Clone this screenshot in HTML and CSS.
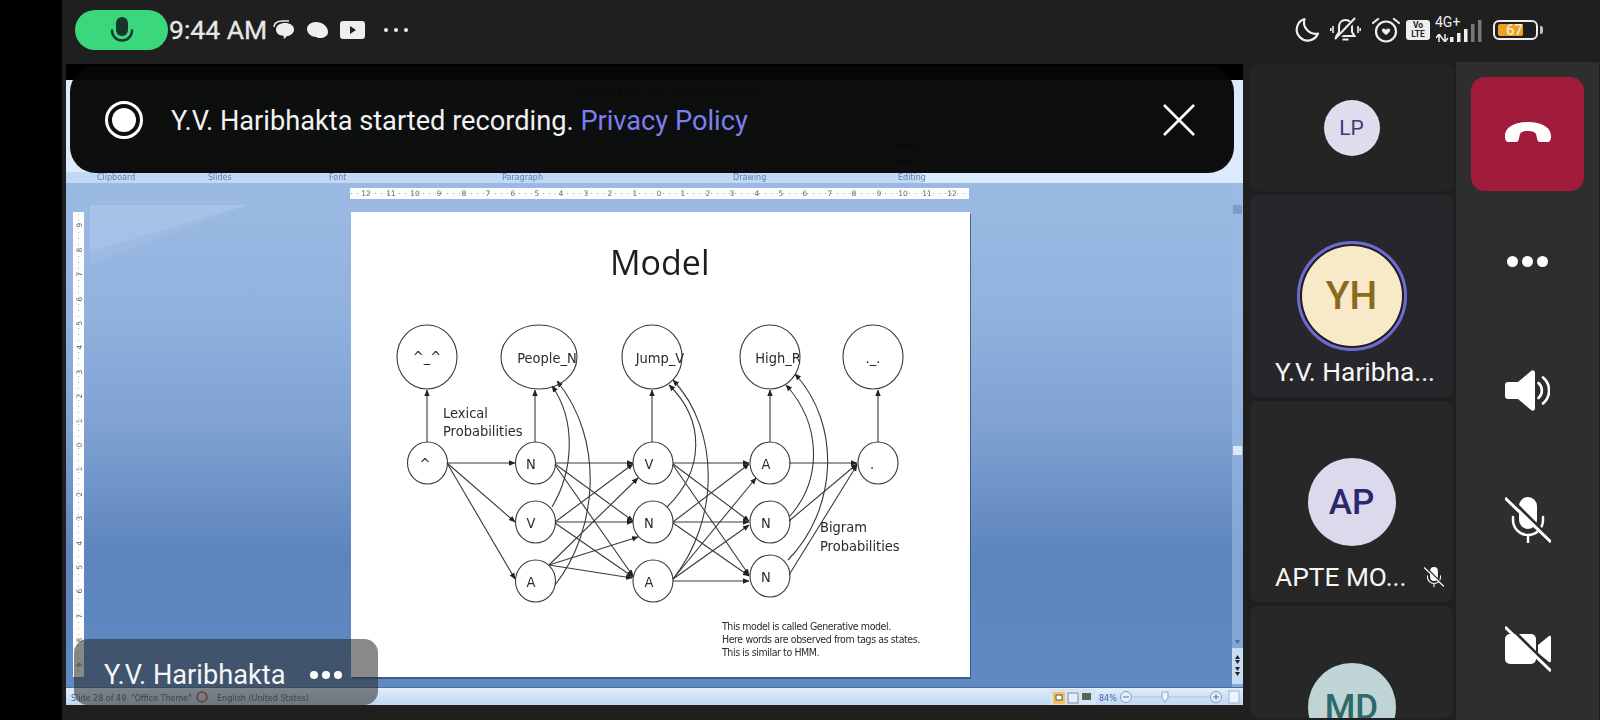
FILE: index.html
```html
<!DOCTYPE html>
<html lang="en">
<head>
    <meta charset="UTF-8">
    <meta name="viewport" content="width=device-width, initial-scale=1.0">
    <title>Meeting</title>
    <link rel="stylesheet" href="styles.css">
</head>
<body>
    <svg class="defs" width="0" height="0">
        <defs>
            <symbol id="mic-off" viewBox="0 0 46 46">
                <rect x="14" y="0" width="18" height="32" rx="9" fill="#fff"/>
                <path d="M8 20v3a15 15 0 0 0 30 0v-3M23 38v8" fill="none" stroke="#fff" stroke-width="2.5" stroke-linecap="round"/>
                <path d="M3 -1L49 45" stroke="#2e2e2e" stroke-width="3"/>
                <path d="M0 1L46 45" stroke="#fff" stroke-width="3"/>
            </symbol>
            <marker id="head" viewBox="0 0 6 6" refX="5.5" refY="3" markerWidth="6" markerHeight="6" orient="auto">
                <path d="M0 0.5L6 3L0 5.5Z" fill="#222"/>
            </marker>
            <linearGradient id="desk" x1="0" y1="0" x2="0" y2="1">
                <stop offset="0" stop-color="#9bbae3"/>
                <stop offset="0.25" stop-color="#92b2de"/>
                <stop offset="0.48" stop-color="#7fa2d2"/>
                <stop offset="0.74" stop-color="#5d84bd"/>
                <stop offset="1" stop-color="#5f8ac4"/>
            </linearGradient>
            <linearGradient id="strip" x1="0" y1="0" x2="0" y2="1">
                <stop offset="0" stop-color="#e2eefb"/>
                <stop offset="1" stop-color="#c0d6f1"/>
            </linearGradient>
        </defs>
    </svg>

    <div class="bezel"></div>
    <div class="phone">
        <header class="statusbar">
            <div class="mic-pill">
                <svg width="24" height="26" viewBox="0 0 24 26">
                    <rect x="6" y="0" width="12" height="19" rx="6" fill="#17352a"/>
                    <path d="M2 13.5a10 10 0 0 0 20 0" fill="none" stroke="#17352a" stroke-width="2.4" stroke-linecap="round"/>
                </svg>
            </div>
            <span class="clock">9:44 AM</span>
            <div class="notif-icons">
                <svg width="22" height="20" viewBox="0 0 22 20">
                    <path d="M1 7C1 3 5 1 10 1h6" fill="none" stroke="#eee" stroke-width="1.4"/>
                    <path d="M3 9.5C3 5.5 7 3 12 3s9 2.5 9 6.5-4 6.5-7 6.5l-3 3-.5-3.2C6 15.6 3 13 3 9.5Z" fill="#eee"/>
                </svg>
                <svg width="23" height="18" viewBox="0 0 23 18">
                    <path d="M1 8c0-4 4-7 9-7 6 0 12 4 12 10 0 4-4 6-8 6-2 0-3-.5-4-1-5 0-9-4-9-8Z" fill="#eee"/>
                </svg>
                <svg width="25" height="18" viewBox="0 0 25 18">
                    <rect width="25" height="18" rx="3" fill="#eee"/>
                    <path d="M10 5l6 4-6 4Z" fill="#222"/>
                </svg>
                <div class="more-dots">
                    <span></span><span></span><span></span>
                </div>
            </div>
            <div class="sys-icons">
                <svg class="ico-moon" width="26" height="26" viewBox="0 0 26 26">
                    <path d="M10.5 2A11 11 0 1 0 24 16.5 11.5 11.5 0 0 1 10.5 2Z" fill="none" stroke="#eee" stroke-width="2.2" stroke-linejoin="round"/>
                </svg>
                <svg class="ico-bell" width="31" height="26" viewBox="0 0 31 26">
                    <path d="M15.5 3c-4 0-6.5 3-6.5 7v5l-2.500 4h18l-2.500-4v-5c0-4-2.500-7-6.500-7ZM12.500 22.500h6" fill="none" stroke="#eee" stroke-width="2"/>
                    <path d="M3 9v7M.8 11v3M28 9v7M30.200 11v3" stroke="#eee" stroke-width="1.600"/>
                    <path d="M6 23L26 1" stroke="#222" stroke-width="4"/>
                    <path d="M5 22L25 1" stroke="#eee" stroke-width="2"/>
                </svg>
                <svg class="ico-alarm" width="28" height="26" viewBox="0 0 28 26">
                    <circle cx="14" cy="14.500" r="10" fill="none" stroke="#eee" stroke-width="2.200"/>
                    <path d="M1 6l5-4M27 6l-5-4" stroke="#eee" stroke-width="2.200" stroke-linecap="round"/>
                    <path d="M10 12.500c1-1.500 3-1 4 .5 1-1.500 3-2 4-.5s-2 4-4 5.500c-2-1.500-5-4-4-5.500Z" fill="#eee"/>
                </svg>
                <div class="volte"><span>Vo</span><span>LTE</span></div>
                <div class="network">
                    <span class="net-label">4G+</span>
                    <svg class="net-arrows" width="13" height="8" viewBox="0 0 13 8">
                        <path d="M3 8V2M0 4l3-4 3 4M9 0v6M6 4l3 4 3-4" stroke="#eee" stroke-width="1.500" fill="none"/>
                    </svg>
                    <svg class="net-bars" width="33" height="22" viewBox="0 0 33 22">
                        <rect x="0" y="17" width="3.500" height="5" fill="#eee"/>
                        <rect x="7" y="13" width="3.500" height="9" fill="#eee"/>
                        <rect x="14" y="9" width="3.500" height="13" fill="#eee"/>
                        <rect x="21" y="4" width="3.500" height="18" fill="#777"/>
                        <rect x="28" y="0" width="3.500" height="22" fill="#777"/>
                    </svg>
                </div>
                <div class="battery">
                    <div class="battery-body"><div class="battery-fill"></div><span class="battery-num">67</span></div>
                    <div class="battery-nub"></div>
                </div>
            </div>
        </header>

        <main class="main">
            <section class="stage">
                <svg class="shared-screen" width="1177" height="641" viewBox="66 64 1177 641">
                    <rect x="66" y="64" width="1177" height="641" fill="#000"/>
                    <!-- ribbon -->
                    <rect x="66" y="80" width="1177" height="103" fill="#dcebfb"/>
                    <rect x="66" y="172" width="856" height="11" fill="#c3d9f3"/>
                    <g class="ribbon-text">
                        <text x="97" y="180">Clipboard</text>
                        <text x="208" y="180">Slides</text>
                        <text x="329" y="180">Font</text>
                        <text x="502" y="180">Paragraph</text>
                        <text x="733" y="180">Drawing</text>
                        <text x="898" y="180">Editing</text>
                    </g>
                    <text class="ghost" x="572" y="94">POS tagging 2023 .pptx - Microsoft PowerPoint</text>
                    <text class="ghost" x="893" y="131">Find</text>
                    <text class="ghost" x="893" y="148">Replace</text>
                    <text class="ghost" x="893" y="164">Select</text>

                    <!-- workspace -->
                    <rect x="66" y="183" width="1177" height="505" fill="url(#desk)"/>
                    <path d="M90 205H247L90 265Z" fill="#b4cbed" opacity="0.2"/>
                    <path d="M90 205H247L90 252Z" fill="#b7cdee" opacity="0.35"/>

                    <!-- top ruler -->
                    <rect x="350" y="188" width="619" height="11" fill="#fdfdfd"/>
                    <g class="ruler">
                        <text x="366" y="196">12</text><text x="391" y="196">11</text><text x="415" y="196">10</text>
                        <text x="439" y="196">9</text><text x="464" y="196">8</text><text x="488" y="196">7</text>
                        <text x="513" y="196">6</text><text x="537" y="196">5</text><text x="561" y="196">4</text>
                        <text x="586" y="196">3</text><text x="610" y="196">2</text><text x="635" y="196">1</text>
                        <text x="659" y="196">0</text><text x="683" y="196">1</text><text x="708" y="196">2</text>
                        <text x="732" y="196">3</text><text x="757" y="196">4</text><text x="781" y="196">5</text>
                        <text x="805" y="196">6</text><text x="830" y="196">7</text><text x="854" y="196">8</text>
                        <text x="879" y="196">9</text><text x="903" y="196">10</text><text x="927" y="196">11</text>
                        <text x="952" y="196">12</text>
                    </g>
                    <path class="ruler-ticks" d="M351 193.500H969"/>

                    <!-- left ruler -->
                    <rect x="73" y="212" width="11" height="465" fill="#fdfdfd"/>
                    <path class="ruler-ticks" d="M78.500 214V676"/>
                    <g class="ruler">
                        <text transform="translate(82 225) rotate(-90)">9</text>
                        <text transform="translate(82 250) rotate(-90)">8</text>
                        <text transform="translate(82 274) rotate(-90)">7</text>
                        <text transform="translate(82 299) rotate(-90)">6</text>
                        <text transform="translate(82 323) rotate(-90)">5</text>
                        <text transform="translate(82 347) rotate(-90)">4</text>
                        <text transform="translate(82 372) rotate(-90)">3</text>
                        <text transform="translate(82 396) rotate(-90)">2</text>
                        <text transform="translate(82 421) rotate(-90)">1</text>
                        <text transform="translate(82 445) rotate(-90)">0</text>
                        <text transform="translate(82 469) rotate(-90)">1</text>
                        <text transform="translate(82 494) rotate(-90)">2</text>
                        <text transform="translate(82 518) rotate(-90)">3</text>
                        <text transform="translate(82 543) rotate(-90)">4</text>
                        <text transform="translate(82 567) rotate(-90)">5</text>
                        <text transform="translate(82 591) rotate(-90)">6</text>
                        <text transform="translate(82 616) rotate(-90)">7</text>
                        <text transform="translate(82 640) rotate(-90)">8</text>
                        <text transform="translate(82 665) rotate(-90)">9</text>
                    </g>

                    <!-- scrollbar -->
                    <rect x="1232" y="183" width="11" height="505" fill="#9dbbe4" opacity="0.6"/>
                    <rect x="1233" y="205" width="9" height="9" fill="#7d9ccb"/>
                    <rect x="1233" y="446" width="9" height="9" fill="#dbe8f8"/>
                    <rect x="1232" y="648" width="11" height="36" fill="#c8dcf4"/>
                    <path d="M1235 640h5l-2.500 4Z" fill="#50709f"/>
                    <path d="M1235 659l2.500-4 2.500 4ZM1235 660l2.500 4 2.500-4ZM1235 667h5l-2.500 4ZM1235 672h5l-2.500 4Z" fill="#222"/>

                    <!-- slide -->
                    <rect x="352" y="214" width="619" height="465" fill="#33527f" opacity="0.8"/>
                    <rect x="351" y="212" width="619" height="465" fill="#fff"/>
                    <text class="slide-title" x="610" y="275">Model</text>

                    <g class="edges">
                        <path d="M427 442V390" marker-end="url(#head)"/>
                        <path d="M535 442V390" marker-end="url(#head)"/>
                        <path d="M652 442V390" marker-end="url(#head)"/>
                        <path d="M770 442V390" marker-end="url(#head)"/>
                        <path d="M878 442V390" marker-end="url(#head)"/>
                        <path d="M447 463H515" marker-end="url(#head)"/>
                        <path d="M447 463L515 522" marker-end="url(#head)"/>
                        <path d="M447 463L515 579" marker-end="url(#head)"/>

                        <path d="M555 463H633" marker-end="url(#head)"/>
                        <path d="M555 464L633 521" marker-end="url(#head)"/>
                        <path d="M555 465L633 576" marker-end="url(#head)"/>
                        <path d="M555 522L633 464" marker-end="url(#head)"/>
                        <path d="M555 522H633" marker-end="url(#head)"/>
                        <path d="M555 523L633 577" marker-end="url(#head)"/>
                        <path d="M549 565L638 478" marker-end="url(#head)"/>
                        <path d="M549 565L638 537" marker-end="url(#head)"/>
                        <path d="M549 565L632 578" marker-end="url(#head)"/>

                        <path d="M673 463H749" marker-end="url(#head)"/>
                        <path d="M673 464L749 521" marker-end="url(#head)"/>
                        <path d="M673 465L749 575" marker-end="url(#head)"/>
                        <path d="M673 522L749 464" marker-end="url(#head)"/>
                        <path d="M673 522H749" marker-end="url(#head)"/>
                        <path d="M673 523L749 576" marker-end="url(#head)"/>
                        <path d="M673 579L756 478" marker-end="url(#head)"/>
                        <path d="M673 579L749 525" marker-end="url(#head)"/>
                        <path d="M673 581H749" marker-end="url(#head)"/>

                        <path d="M789 463H857" marker-end="url(#head)"/>
                        <path d="M789 521L857 464" marker-end="url(#head)"/>
                        <path d="M789 575L857 465" marker-end="url(#head)"/>

                        <path d="M552 507C574 470 576 420 552 386" marker-end="url(#head)"/>
                        <path d="M555 585C598 530 605 440 557 381" marker-end="url(#head)"/>
                        <path d="M667 507C705 470 705 420 669 385" marker-end="url(#head)"/>
                        <path d="M673 579C720 520 720 430 673 380" marker-end="url(#head)"/>
                        <path d="M790 516C822 480 822 425 786 385" marker-end="url(#head)"/>
                        <path d="M788 560C837 510 842 425 795 374" marker-end="url(#head)"/>
                    </g>

                    <g class="nodes">
                        <ellipse cx="427" cy="357" rx="30" ry="32"/>
                        <ellipse cx="539" cy="357" rx="38" ry="32"/>
                        <ellipse cx="652" cy="357" rx="30" ry="32"/>
                        <ellipse cx="770" cy="357" rx="30" ry="32"/>
                        <ellipse cx="873" cy="357" rx="30" ry="32"/>
                        <ellipse cx="427.500" cy="463" rx="20" ry="21"/>
                        <ellipse cx="535.500" cy="463" rx="20" ry="21"/>
                        <ellipse cx="535.500" cy="522" rx="20" ry="21"/>
                        <ellipse cx="535.500" cy="581" rx="20" ry="21"/>
                        <ellipse cx="653" cy="463" rx="20" ry="21"/>
                        <ellipse cx="653" cy="522" rx="20" ry="21"/>
                        <ellipse cx="653" cy="581" rx="20" ry="21"/>
                        <ellipse cx="770" cy="463" rx="20" ry="21"/>
                        <ellipse cx="770" cy="522" rx="20" ry="21"/>
                        <ellipse cx="770" cy="576" rx="20" ry="21"/>
                        <ellipse cx="878" cy="463" rx="20" ry="21"/>
                    </g>

                    <g class="labels">
                        <text x="427" y="362">^_^</text>
                        <text x="547" y="363">People_N</text>
                        <text x="660" y="363">Jump_V</text>
                        <text x="778" y="363">High_R</text>
                        <text x="873" y="363">._.</text>
                        <text x="425" y="469">^</text>
                        <text x="531" y="469">N</text>
                        <text x="531" y="528">V</text>
                        <text x="531" y="587">A</text>
                        <text x="649" y="469">V</text>
                        <text x="649" y="528">N</text>
                        <text x="649" y="587">A</text>
                        <text x="766" y="469">A</text>
                        <text x="766" y="528">N</text>
                        <text x="766" y="582">N</text>
                        <text x="872" y="469">.</text>
                    </g>
                    <g class="captions">
                        <text x="443" y="418">Lexical</text>
                        <text x="443" y="436">Probabilities</text>
                        <text x="820" y="532">Bigram</text>
                        <text x="820" y="551">Probabilities</text>
                    </g>
                    <g class="note">
                        <text x="722" y="630">This model is called Generative model.</text>
                        <text x="722" y="643">Here words are observed from tags as states.</text>
                        <text x="722" y="656">This is similar to HMM.</text>
                    </g>

                    <!-- status bar of the presentation -->
                    <rect x="66" y="688" width="1177" height="17" fill="url(#strip)"/>
                    <path d="M66 687.500H1243" stroke="#4d6f9f" stroke-width="1"/>
                    <rect x="1050" y="689" width="46" height="16" fill="#d6e4f5"/>
                    <g class="status-text">
                        <text x="71" y="701">Slide 28 of 49</text>
                        <text x="131" y="701">"Office Theme"</text>
                        <text x="217" y="701">English (United States)</text>
                        <text class="zoom-pct" x="1099" y="701">84%</text>
                    </g>
                    <circle cx="202" cy="697" r="5" fill="none" stroke="#c8562c" stroke-width="1.500"/>
                    <rect x="1053" y="692" width="12" height="12" fill="#f1c45f"/>
                    <rect x="1056" y="695" width="6" height="5" fill="#fff" stroke="#555"/>
                    <rect x="1068" y="693" width="10" height="10" fill="#e4edf8" stroke="#7c8fa8"/>
                    <rect x="1082" y="693" width="9" height="7" fill="#4d6a55"/>
                    <circle cx="1126" cy="697" r="5.500" fill="#e8f0fa" stroke="#7f9cc2"/>
                    <path d="M1123 697h6" stroke="#54708f"/>
                    <path d="M1133 697H1209" stroke="#a9c0dc"/>
                    <path d="M1162 692h6v6l-3 4-3-4Z" fill="#eef3fa" stroke="#8ba5c6"/>
                    <circle cx="1216" cy="697" r="5.500" fill="#e8f0fa" stroke="#7f9cc2"/>
                    <path d="M1213 697h6M1216 694v6" stroke="#54708f"/>
                    <rect x="1229" y="691" width="10" height="12" fill="#eef3fa" stroke="#9bb3d2"/>
                </svg>

                <div class="toast">
                    <span class="rec-icon"></span>
                    <span class="toast-text">Y.V. Haribhakta started recording. <a class="toast-link">Privacy Policy</a></span>
                    <svg class="toast-close" width="32" height="32" viewBox="0 0 32 32">
                        <path d="M1 1L31 31M31 1L1 31" stroke="#fff" stroke-width="2.600"/>
                    </svg>
                </div>

                <div class="name-tag">
                    <span class="name-tag-text">Y.V. Haribhakta</span>
                    <div class="tag-dots"><span></span><span></span><span></span></div>
                </div>
            </section>

            <aside class="participants">
                <div class="card card-lp">
                    <div class="avatar avatar-lp">LP</div>
                </div>
                <div class="card card-active">
                    <div class="avatar-ring"><div class="avatar avatar-yh">YH</div></div>
                    <div class="card-name">Y.V. Haribha...</div>
                </div>
                <div class="card card-person">
                    <div class="avatar avatar-ap">AP</div>
                    <div class="card-name">APTE MO...<svg class="card-mic" width="20" height="20"><use href="#mic-off"/></svg></div>
                </div>
                <div class="card card-person card-last">
                    <div class="avatar avatar-md">MD</div>
                </div>
            </aside>

            <nav class="controls">
                <button class="hangup">
                    <svg width="46" height="20" viewBox="0 0 46 20">
                        <path d="M0 14C0 4 12 0 23 0S46 4 46 14C46 18 45 20 42 20H35C33 20 32 18 32 16L31 12C30 10 27 9 23 9S16 10 15 12L14 16C14 18 13 20 11 20H4C1 20 0 18 0 14Z" fill="#fff"/>
                    </svg>
                </button>
                <div class="control-list">
                    <div class="control">
                        <div class="big-dots"><span></span><span></span><span></span></div>
                    </div>
                    <div class="control">
                        <svg width="45" height="41" viewBox="0 0 45 41">
                            <path d="M3 12H13L26 1C28-.5 30 .5 30 3V38C30 40.500 28 41.500 26 40L13 29H3C1 29 0 28 0 26V15C0 13 1 12 3 12Z" fill="#fff"/>
                            <path d="M33.500 13a10 10 0 0 1 0 15M38 7.500a17 17 0 0 1 0 26" fill="none" stroke="#fff" stroke-width="2.600" stroke-linecap="round"/>
                        </svg>
                    </div>
                    <div class="control">
                        <svg width="46" height="46"><use href="#mic-off"/></svg>
                    </div>
                    <div class="control">
                        <svg width="46" height="46" viewBox="0 0 46 46">
                            <rect x="0" y="8" width="31" height="30" rx="5" fill="#fff"/>
                            <path d="M33 19L44 10C45 9.500 46 10 46 11V35C46 36 45 36.500 44 36L33 27Z" fill="#fff"/>
                            <path d="M3 -1L49 45" stroke="#2e2e2e" stroke-width="3"/>
                            <path d="M0 1L46 45" stroke="#fff" stroke-width="3"/>
                        </svg>
                    </div>
                </div>
            </nav>
        </main>
    </div>
</body>
</html>
```

FILE: styles.css
```css
* {
    box-sizing: border-box;
}
html, body {
    margin: 0;
    padding: 0;
    height: 100%;
    overflow: hidden;
}
body {
    display: flex;
    width: 1600px;
    height: 720px;
    background-color: #1f1f1f;
    font-family: Roboto, "Liberation Sans", sans-serif;
    color: #fff;
}
.defs {
    position: absolute;
}
.bezel {
    width: 62px;
    background-color: #000;
}
.phone {
    flex: 1;
    display: flex;
    flex-direction: column;
    min-width: 0;
}

/* status bar */
.statusbar {
    height: 62px;
    display: flex;
    align-items: center;
    padding-left: 13px;
    padding-bottom: 3px;
}
.mic-pill {
    width: 93px;
    height: 40px;
    border-radius: 20px;
    background-color: #3ad77d;
    display: flex;
    align-items: center;
    justify-content: center;
}
.clock {
    margin-left: 1px;
    font-size: 26.5px;
    color: #e8e8e8;
    -webkit-text-stroke: 0.3px #e8e8e8;
}
.notif-icons {
    display: flex;
    align-items: center;
    margin-left: 6px;
    gap: 11px;
}
.more-dots {
    display: flex;
    gap: 6px;
    margin-left: 8px;
}
.more-dots span {
    width: 4px;
    height: 4px;
    border-radius: 50%;
    background-color: #eee;
}
.sys-icons {
    margin-left: auto;
    margin-right: 57px;
    display: flex;
    align-items: center;
}
.ico-bell {
    margin-left: 10px;
}
.ico-alarm {
    margin-left: 11px;
}
.volte {
    margin-left: 6px;
    width: 24px;
    height: 20px;
    background-color: #eee;
    border-radius: 3px;
    color: #222;
    display: flex;
    flex-direction: column;
    align-items: center;
    font-size: 8.5px;
    line-height: 9px;
    font-weight: 700;
    padding-top: 1px;
}
.network {
    position: relative;
    width: 48px;
    height: 24px;
    margin-left: 5px;
}
.net-label {
    position: absolute;
    left: 0;
    top: -4px;
    font-size: 14px;
    color: #eee;
}
.net-arrows {
    position: absolute;
    left: 1px;
    bottom: 0;
}
.net-bars {
    position: absolute;
    left: 15px;
    bottom: 0;
}
.battery {
    margin-left: 10px;
    display: flex;
    align-items: center;
    gap: 2px;
}
.battery-body {
    position: relative;
    width: 45px;
    height: 20px;
    border: 2px solid #eee;
    border-radius: 6px;
    padding: 2px 3px;
}
.battery-fill {
    width: 25px;
    height: 100%;
    background-color: #eba022;
    border-radius: 2px;
}
.battery-num {
    position: absolute;
    left: 11px;
    top: -1px;
    font-size: 15px;
    line-height: 18px;
    font-weight: 500;
    color: #f4e8cf;
}
.battery-nub {
    width: 3px;
    height: 8px;
    background-color: #bbb;
    border-radius: 0 2px 2px 0;
}

/* main row */
.main {
    flex: 1;
    display: flex;
    min-height: 0;
}
.stage {
    position: relative;
    width: 1177px;
    height: 641px;
    margin: 2px 0 0 4px;
}
.shared-screen {
    display: block;
    filter: blur(0.45px);
}
.shared-screen text {
    font-family: "DejaVu Sans", sans-serif;
}
.ribbon-text text {
    font-size: 8px;
    fill: #5f7fb5;
}
.ghost {
    font-size: 8px;
    fill: #444;
}
.ruler text {
    font-size: 7.500px;
    fill: #666;
    text-anchor: middle;
}
.ruler-ticks {
    stroke: #aaa;
    stroke-width: 1;
    stroke-dasharray: 1 5;
    fill: none;
}
.shared-screen .slide-title {
    font-family: "Open Sans", sans-serif;
    font-size: 34px;
    fill: #1d1d1d;
}
.edges path {
    fill: none;
    stroke: #3a3a3a;
    stroke-width: 1.100;
}
.nodes ellipse {
    fill: none;
    stroke: #3a3a3a;
    stroke-width: 1.100;
}
.labels text {
    font-size: 14.500px;
    fill: #2b2b2b;
    text-anchor: middle;
    font-stretch: condensed;
}
.captions text {
    font-size: 14.500px;
    fill: #2b2b2b;
    font-stretch: condensed;
}
.note text {
    font-size: 10.500px;
    fill: #2b2b2b;
    font-stretch: condensed;
    letter-spacing: -0.4px;
}
.status-text text {
    font-size: 8px;
    fill: #56657a;
}
.status-text .zoom-pct {
    fill: #3e63a0;
}

/* overlays on the shared screen */
.toast {
    position: absolute;
    left: 4px;
    top: 2px;
    width: 1164px;
    height: 107px;
    border-radius: 26px;
    background-color: rgba(6, 6, 6, 0.97);
    display: flex;
    align-items: center;
    padding-left: 35px;
    padding-right: 39px;
}
.rec-icon {
    width: 38px;
    height: 38px;
    border-radius: 50%;
    border: 3px solid #fff;
    padding: 4px;
    background-color: #fff;
    background-clip: content-box;
    flex-shrink: 0;
}
.toast-text {
    margin-left: 28px;
    margin-top: 3px;
    font-size: 27.200px;
    color: #f2f2f2;
}
.toast-link {
    color: #7b7ff0;
}
.toast-close {
    margin-left: auto;
}
.name-tag {
    position: absolute;
    left: 8px;
    bottom: 0;
    width: 304px;
    height: 66px;
    border-radius: 14px;
    background-color: rgba(40, 40, 40, 0.55);
    display: flex;
    align-items: center;
    padding: 6px 0 0 30px;
}
.name-tag-text {
    font-size: 27.200px;
    color: #f6f6f6;
}
.tag-dots {
    display: flex;
    gap: 4px;
    margin-left: 25px;
}
.tag-dots span {
    width: 8px;
    height: 8px;
    border-radius: 50%;
    background-color: #fff;
}

/* participants */
.participants {
    width: 203px;
    margin-left: 7px;
    margin-top: 2px;
    padding-bottom: 2px;
    display: flex;
    flex-direction: column;
    gap: 4px;
}
.card {
    background-color: #252527;
    border-radius: 8px;
    display: flex;
    flex-direction: column;
    align-items: center;
    overflow: hidden;
}
.card-lp {
    height: 127px;
    justify-content: center;
    background-color: #242424;
}
.card-active {
    height: 202px;
    padding-top: 46px;
    background-color: #27272b;
}
.card-person {
    height: 201px;
    padding-top: 57px;
    background-color: #272727;
}
.card-last {
    flex: 1;
    height: auto;
}
.avatar {
    border-radius: 50%;
    display: flex;
    align-items: center;
    justify-content: center;
    flex-shrink: 0;
    font-weight: 500;
}
.avatar-lp {
    width: 56px;
    height: 56px;
    background-color: #e0dced;
    color: #3f3a70;
    font-size: 21px;
    font-weight: 400;
}
.avatar-ring {
    width: 110px;
    height: 110px;
    border-radius: 50%;
    border: 3px solid #6a6cd0;
    padding: 2px;
    background-color: #1d1d20;
    flex-shrink: 0;
}
.avatar-yh {
    width: 100%;
    height: 100%;
    background-color: #f8e9c9;
    color: #8a6a1e;
    font-size: 39px;
}
.avatar-ap {
    width: 88px;
    height: 88px;
    background-color: #dcd9ec;
    color: #2b2870;
    font-size: 35px;
}
.avatar-md {
    width: 88px;
    height: 88px;
    background-color: #bfd5d5;
    color: #2e6a6a;
    font-size: 35px;
}
.card-name {
    align-self: flex-start;
    display: flex;
    align-items: center;
    margin-left: 25px;
    font-size: 26.300px;
    line-height: 30px;
    color: #f6f6f6;
    white-space: nowrap;
}
.card-active .card-name {
    margin-top: 6px;
}
.card-person .card-name {
    margin-top: 16px;
}
.card-mic {
    margin-left: 18px;
}

/* call controls */
.controls {
    width: 143px;
    margin-left: 3px;
    background-color: #2e2e2e;
    padding-top: 15px;
    display: flex;
    flex-direction: column;
    align-items: center;
}
.hangup {
    width: 113px;
    height: 114px;
    border: none;
    border-radius: 14px;
    background-color: #a01c3a;
    display: flex;
    align-items: center;
    justify-content: center;
    padding: 0 0 4px;
    flex-shrink: 0;
}
.control-list {
    margin-top: 6px;
    display: flex;
    flex-direction: column;
}
.control {
    height: 129px;
    display: flex;
    align-items: center;
    justify-content: center;
}
.big-dots {
    display: flex;
    gap: 4px;
}
.big-dots span {
    width: 11px;
    height: 11px;
    border-radius: 50%;
    background-color: #fff;
}
```
